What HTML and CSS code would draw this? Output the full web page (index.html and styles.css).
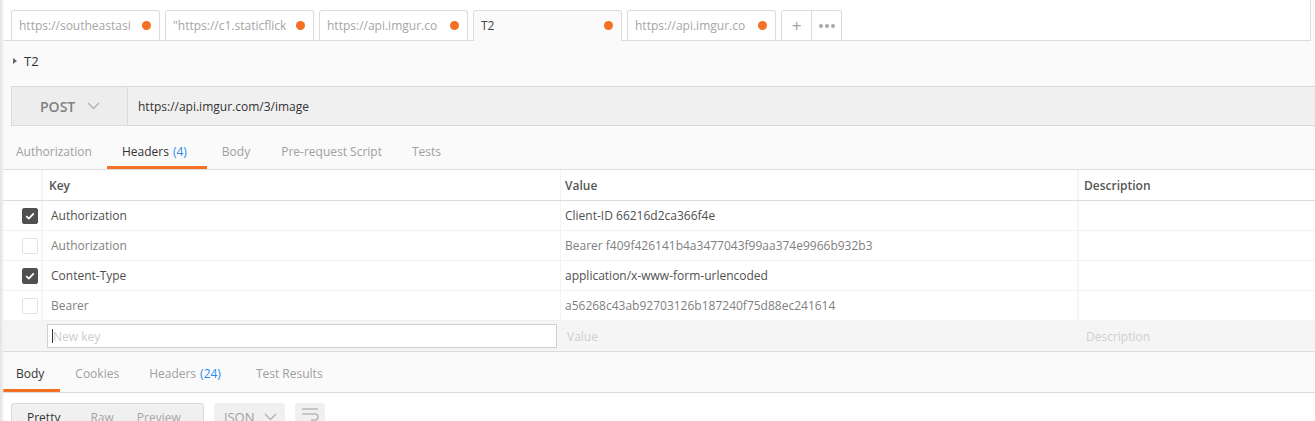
FILE: index.html
```html
<!DOCTYPE html>
<html>
<head>
<meta charset="utf-8">
<link rel="stylesheet" href="styles.css">
</head>
<body>
<div class="app">
  <div class="tabbar">
    <div class="tab"><span class="tab-title">https://southeastasi</span><span class="dot"></span></div>
    <div class="tab"><span class="tab-title">"https://c1.staticflick</span><span class="dot"></span></div>
    <div class="tab"><span class="tab-title">https://api.imgur.co</span><span class="dot"></span></div>
    <div class="tab active"><span class="tab-title">T2</span><span class="dot"></span></div>
    <div class="tab"><span class="tab-title">https://api.imgur.co</span><span class="dot"></span></div>
    <div class="tab-actions">
      <div class="tab-btn plus">+</div>
      <div class="tab-btn more"><span></span><span></span><span></span></div>
    </div>
  </div>

  <div class="main">
    <div class="crumb"><span class="caret"></span><span>T2</span></div>

    <div class="urlbar">
      <div class="method">POST
        <svg class="chev" width="13" height="8" viewBox="0 0 13 8"><path d="M1 1 L6.5 6.5 L12 1" fill="none" stroke="#b5b5b5" stroke-width="1.5"/></svg>
      </div>
      <div class="url">https://api.imgur.com/3/image</div>
    </div>

    <div class="subtabs">
      <div class="stab">Authorization</div>
      <div class="stab active">Headers <span class="count">(4)</span></div>
      <div class="stab">Body</div>
      <div class="stab">Pre-request Script</div>
      <div class="stab">Tests</div>
    </div>

    <div class="kv">
      <div class="row head">
        <div class="c chk"></div>
        <div class="c key">Key</div>
        <div class="c val">Value</div>
        <div class="c desc">Description</div>
      </div>
      <div class="row on">
        <div class="c chk"><span class="box checked"><svg width="10" height="8" viewBox="0 0 10 8"><path d="M1.2 4.2 L3.8 6.6 L8.8 1.4" fill="none" stroke="#fff" stroke-width="1.8"/></svg></span></div>
        <div class="c key">Authorization</div>
        <div class="c val">Client-ID 66216d2ca366f4e</div>
        <div class="c desc"></div>
      </div>
      <div class="row off">
        <div class="c chk"><span class="box"></span></div>
        <div class="c key">Authorization</div>
        <div class="c val">Bearer f409f426141b4a3477043f99aa374e9966b932b3</div>
        <div class="c desc"></div>
      </div>
      <div class="row on">
        <div class="c chk"><span class="box checked"><svg width="10" height="8" viewBox="0 0 10 8"><path d="M1.2 4.2 L3.8 6.6 L8.8 1.4" fill="none" stroke="#fff" stroke-width="1.8"/></svg></span></div>
        <div class="c key">Content-Type</div>
        <div class="c val">application/x-www-form-urlencoded</div>
        <div class="c desc"></div>
      </div>
      <div class="row off">
        <div class="c chk"><span class="box"></span></div>
        <div class="c key">Bearer</div>
        <div class="c val">a56268c43ab92703126b187240f75d88ec241614</div>
        <div class="c desc"></div>
      </div>
      <div class="row new">
        <div class="c chk"></div>
        <div class="c key"><div class="input"><span class="cursor"></span>New key</div></div>
        <div class="c val ph">Value</div>
        <div class="c desc ph">Description</div>
      </div>
    </div>

    <div class="resptabs">
      <div class="rtab active">Body</div>
      <div class="rtab">Cookies</div>
      <div class="rtab">Headers <span class="count">(24)</span></div>
      <div class="rtab">Test Results</div>
    </div>

    <div class="toolbar">
      <div class="seg">
        <div class="segbtn active">Pretty</div>
        <div class="segbtn">Raw</div>
        <div class="segbtn">Preview</div>
      </div>
      <div class="drop">JSON
        <svg class="chev" width="13" height="8" viewBox="0 0 13 8"><path d="M1 1 L6.5 6.5 L12 1" fill="none" stroke="#b5b5b5" stroke-width="1.5"/></svg>
      </div>
      <div class="wrap">
        <svg width="20" height="16" viewBox="0 0 20 16"><path d="M2 3 H18 M2 8 H15 a3 3 0 0 1 0 6 H11" fill="none" stroke="#b8b8b8" stroke-width="1.6"/></svg>
      </div>
    </div>
  </div>
</div>
</body>
</html>
```

FILE: styles.css
```css
* { box-sizing: border-box; }
html, body { margin: 0; padding: 0; }
body {
  font-family: "Open Sans", "Liberation Sans", sans-serif;
  font-size: 12px;
  color: #505050;
  background: #fafafa;
  width: 1315px;
  height: 421px;
  overflow: hidden;
}
.app { position: relative; height: 421px; overflow: hidden; }
.app::before {
  content: "";
  position: absolute;
  left: 0; top: 0; bottom: 0;
  width: 4px;
  background: linear-gradient(to right, #e2e2e2, #efefef 60%, rgba(240,240,240,0));
  z-index: 5;
}

/* top tabs */
.tabbar {
  height: 41px;
  background: #fff;
  border-bottom: 1px solid #dcdcdc;
  display: flex;
  align-items: flex-end;
  padding-left: 11px;
  gap: 5px;
  width: 1311px;
  border-right: 1px solid #dcdcdc;
}
.tab {
  flex: none;
  width: 149px;
  height: 30px;
  border: 1px solid #dcdcdc;
  border-bottom: none;
  border-radius: 3px 3px 0 0;
  display: flex;
  align-items: center;
  padding: 0 8px 0 7px;
  color: #a6a6a6;
  font-size: 12px;
  background: #fff;
  overflow: hidden;
}
.tab.active {
  background: #fafafa;
  color: #444;
  height: 31px;
  margin-bottom: -1px;
  padding-bottom: 1px;
}
.tab-title { flex: 1; min-width: 0; overflow: hidden; white-space: nowrap; }
.dot {
  width: 9px; height: 9px;
  border-radius: 50%;
  background: #f47023;
  flex: none;
  margin-left: 6px;
}
.tab-actions {
  flex: none;
  display: flex;
  height: 30px;
  border: 1px solid #dcdcdc;
  border-bottom: none;
  border-radius: 3px 3px 0 0;
}
.tab-btn {
  width: 29px;
  display: flex;
  align-items: center;
  justify-content: center;
  color: #a0a0a0;
}
.tab-btn.plus { font-size: 17px; border-right: 1px solid #dcdcdc; width: 30px; line-height: 1; }
.tab-btn.more { gap: 2px; }
.tab-btn.more span { width: 4px; height: 4px; border-radius: 50%; background: #a8a8a8; }

/* crumb */
.crumb {
  height: 45px;
  display: flex;
  align-items: center;
  padding-left: 13px;
  padding-bottom: 5px;
  font-size: 13px;
  color: #333;
}
.caret {
  width: 0; height: 0;
  border-top: 3px solid transparent;
  border-bottom: 3px solid transparent;
  border-left: 4px solid #666;
  margin-right: 7px;
}

/* url bar */
.urlbar {
  margin-left: 11px;
  height: 40px;
  display: flex;
  border: 1px solid #dadada;
  border-right: none;
  background: #f0f0f0;
}
.method {
  width: 116px;
  border-right: 1px solid #dadada;
  background: #ededed;
  display: flex;
  align-items: center;
  padding-left: 28px;
  font-size: 14px;
  font-weight: 600;
  color: #808080;
}
.method .chev { margin-left: 12px; }
.url {
  display: flex;
  align-items: center;
  padding-left: 10px;
  font-size: 12px;
  color: #333;
}

/* sub tabs */
.subtabs {
  margin-top: 1px;
  height: 43px;
  display: flex;
  align-items: stretch;
  border-bottom: 1px solid #dcdcdc;
  padding-left: 1px;
}
.stab, .rtab {
  padding: 0 15px;
  display: flex;
  align-items: center;
  color: #a0a0a0;
  font-size: 12px;
  border-bottom: 3px solid transparent;
}
.stab { padding-top: 9px; }
.stab.active, .rtab.active { color: #333; border-bottom-color: #f47023; }
.stab.active { padding-right: 20px; }
.stab:nth-child(4) { padding-left: 16px; }
.count { color: #2a8bea; margin-left: 4px; }

/* key value table */
.kv { background: #fff; }
.row {
  display: flex;
  height: 30px;
  border-bottom: 1px solid #f2f2f2;
}
.row.head { height: 31px; border-bottom: 1px solid #dcdcdc; }
.row .c {
  display: flex;
  align-items: center;
  border-left: 2px solid #f4f4f4;
}
.row .c.chk { width: 41px; border-left: none; justify-content: flex-end; padding-right: 3px; }
.row .c.key { width: 519px; padding-left: 8px; }
.row .c.val { width: 517px; padding-left: 4px; border-left-width: 1px; }
.row .c.desc { flex: 1; padding-left: 5px; }
.row.head .c { font-weight: 600; color: #555; border-left-color: #f4f4f4; }
.row.head .c.key { padding-left: 6px; }
.row.on .c { color: #505050; }
.row.off .c { color: #7f7f7f; }
.box {
  width: 16px; height: 16px;
  border: 1px solid #e3e3e3;
  border-radius: 2px;
  background: #fff;
  display: flex;
  align-items: center;
  justify-content: center;
}
.box.checked { background: #505050; border-color: #505050; }
.row.new { background: #f5f5f5; border-bottom: 1px solid #dcdcdc; height: 31px; }
.row.new .c { border-left-color: #f5f5f5; }
.row.new .c.key { padding-left: 4px; padding-right: 3px; }
.input {
  width: 100%;
  height: 24px;
  background: #fff;
  border: 1px solid #cfcfcf;
  display: flex;
  align-items: center;
  padding-left: 4px;
  color: #cdcdcd;
}
.cursor { width: 1px; height: 14px; background: #333; margin-right: 0; }
.row.new .c.ph { color: #cfcfcf; }
.row.new .c.val { padding-left: 6px; }
.row.new .c.desc { padding-left: 7px; }

/* response tabs */
.resptabs {
  height: 41px;
  display: flex;
  border-bottom: 1px solid #dcdcdc;
  padding-left: 1px;
}
.rtab { padding-top: 6px; }
.rtab.active { padding-left: 15px; padding-right: 16px; }
.rtab:nth-child(4) { padding-left: 20px; }

.toolbar {
  display: flex;
  gap: 10px;
  padding: 10px 0 0 11px;
  background: #fff;
  height: 40px;
}
.seg, .drop, .wrap {
  height: 30px;
  background: #f0f0f0;
  border-radius: 3px;
}
.seg {
  display: flex;
  border: 1px solid #dadada;
  width: 193px;
  padding-left: 15px;
}
.segbtn {
  display: flex;
  align-items: center;
  color: #a6a6a6;
  padding-right: 23px;
  padding-bottom: 2px;
}
.segbtn.active { color: #333; padding-right: 30px; }
.drop {
  width: 71px;
  display: flex;
  align-items: center;
  padding-left: 10px;
  color: #a0a0a0;
  font-size: 13px;
  padding-bottom: 2px;
}
.drop .chev { margin-left: 9px; }
.wrap {
  width: 30px;
  display: flex;
  justify-content: center;
  padding-top: 3px;
}
```
